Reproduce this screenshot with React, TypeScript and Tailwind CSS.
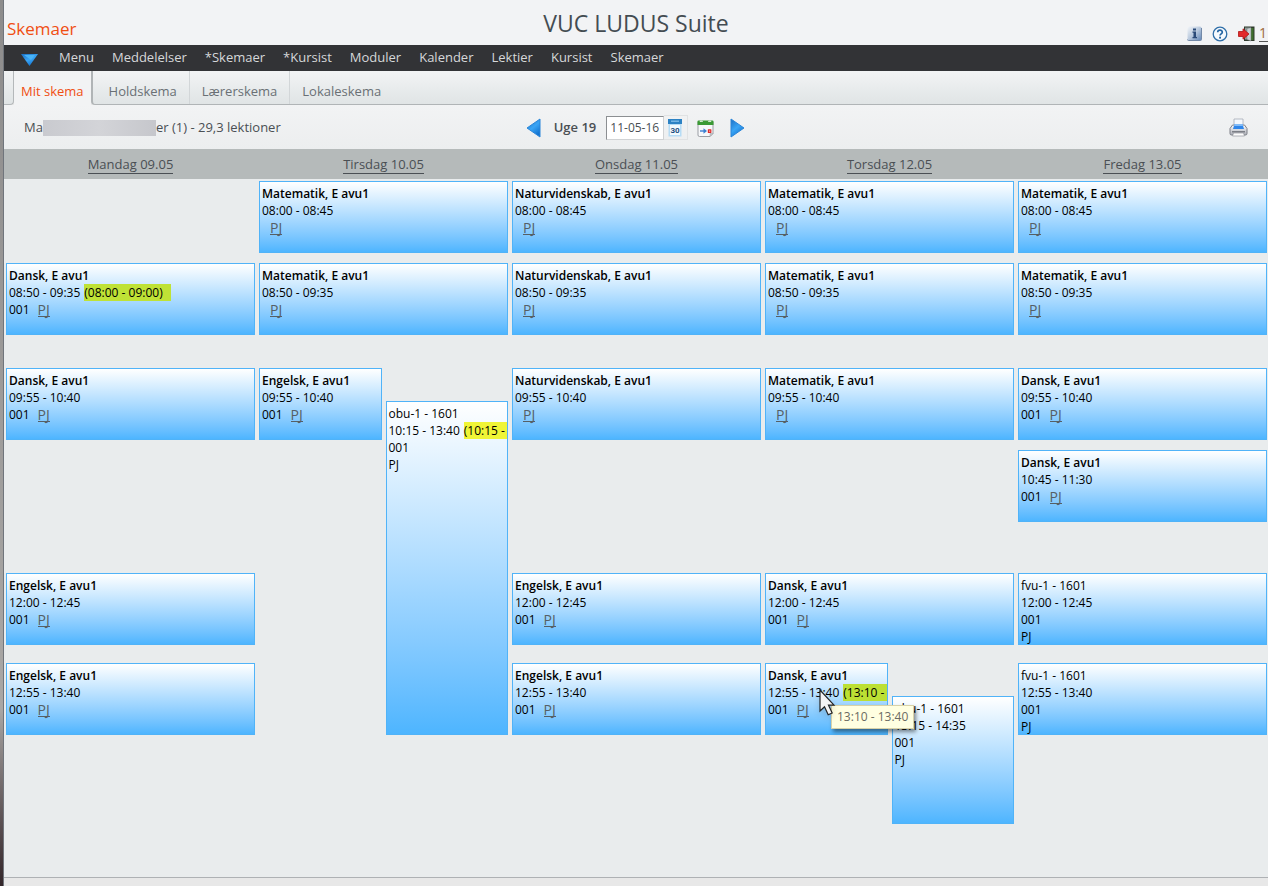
import { clsx } from "clsx";

type Lesson = {
  title: string;
  time: string;
  place: string;
  room?: string;
  plain?: boolean;
  extra?: string;
  extraClass?: string;
  hint?: string;
};

// Rows follow the start and end times of the lessons
const FULL = {
  l0800: "col-span-2 row-start-1 row-end-2",
  l0850: "col-span-2 row-start-3 row-end-4",
  l0955: "col-span-2 row-start-5 row-end-7",
  l1045: "col-span-2 row-start-8 row-end-9",
  l1200: "col-span-2 row-start-10 row-end-11",
  l1255: "col-span-2 row-start-12 row-end-14",
};

const days: { name: string; lessons: Lesson[] }[] = [
  {
    name: "Mandag 09.05",
    lessons: [
      {
        title: "Dansk, E avu1",
        time: "08:50 - 09:35",
        room: "001",
        place: FULL.l0850,
        extra: "(08:00 - 09:00)",
        extraClass: "bg-[#bfe236] pr-2",
      },
      { title: "Dansk, E avu1", time: "09:55 - 10:40", room: "001", place: FULL.l0955 },
      { title: "Engelsk, E avu1", time: "12:00 - 12:45", room: "001", place: FULL.l1200 },
      { title: "Engelsk, E avu1", time: "12:55 - 13:40", room: "001", place: FULL.l1255 },
    ],
  },
  {
    name: "Tirsdag 10.05",
    lessons: [
      { title: "Matematik, E avu1", time: "08:00 - 08:45", place: FULL.l0800 },
      { title: "Matematik, E avu1", time: "08:50 - 09:35", place: FULL.l0850 },
      {
        title: "Engelsk, E avu1",
        time: "09:55 - 10:40",
        room: "001",
        place: "col-start-1 row-start-5 row-end-7",
      },
      {
        title: "obu-1 - 1601",
        time: "10:15 - 13:40",
        room: "001",
        plain: true,
        place: "col-start-2 row-start-6 row-end-14",
        extra: "(10:15 -",
        extraClass: "flex-1 bg-[#f0f536]",
      },
    ],
  },
  {
    name: "Onsdag 11.05",
    lessons: [
      { title: "Naturvidenskab, E avu1", time: "08:00 - 08:45", place: FULL.l0800 },
      { title: "Naturvidenskab, E avu1", time: "08:50 - 09:35", place: FULL.l0850 },
      { title: "Naturvidenskab, E avu1", time: "09:55 - 10:40", place: FULL.l0955 },
      { title: "Engelsk, E avu1", time: "12:00 - 12:45", room: "001", place: FULL.l1200 },
      { title: "Engelsk, E avu1", time: "12:55 - 13:40", room: "001", place: FULL.l1255 },
    ],
  },
  {
    name: "Torsdag 12.05",
    lessons: [
      { title: "Matematik, E avu1", time: "08:00 - 08:45", place: FULL.l0800 },
      { title: "Matematik, E avu1", time: "08:50 - 09:35", place: FULL.l0850 },
      { title: "Matematik, E avu1", time: "09:55 - 10:40", place: FULL.l0955 },
      { title: "Dansk, E avu1", time: "12:00 - 12:45", room: "001", place: FULL.l1200 },
      {
        title: "Dansk, E avu1",
        time: "12:55 - 13:40",
        room: "001",
        place: "col-start-1 row-start-12 row-end-14 z-10",
        extra: "(13:10 -",
        extraClass: "flex-1 bg-[#bce034]",
        hint: "13:10 - 13:40",
      },
      {
        title: "obu-1 - 1601",
        time: "13:15 - 14:35",
        room: "001",
        plain: true,
        place: "col-start-2 row-start-13 row-end-15",
      },
    ],
  },
  {
    name: "Fredag 13.05",
    lessons: [
      { title: "Matematik, E avu1", time: "08:00 - 08:45", place: FULL.l0800 },
      { title: "Matematik, E avu1", time: "08:50 - 09:35", place: FULL.l0850 },
      { title: "Dansk, E avu1", time: "09:55 - 10:40", room: "001", place: FULL.l0955 },
      { title: "Dansk, E avu1", time: "10:45 - 11:30", room: "001", place: FULL.l1045 },
      { title: "fvu-1 - 1601", time: "12:00 - 12:45", room: "001", plain: true, place: FULL.l1200 },
      { title: "fvu-1 - 1601", time: "12:55 - 13:40", room: "001", plain: true, place: FULL.l1255 },
    ],
  },
];

const menu = [
  "Menu",
  "Meddelelser",
  "*Skemaer",
  "*Kursist",
  "Moduler",
  "Kalender",
  "Lektier",
  "Kursist",
  "Skemaer",
];

const tabs = ["Holdskema", "Lærerskema", "Lokaleskema"];

function Gradients() {
  return (
    <svg width="0" height="0" className="absolute" aria-hidden="true">
      <defs>
        <linearGradient id="blue" x1="0" y1="0" x2="0.6" y2="1">
          <stop offset="0" stopColor="#1a6fc4" />
          <stop offset="0.55" stopColor="#3aa5f5" />
          <stop offset="1" stopColor="#1273d0" />
        </linearGradient>
        <linearGradient id="info" x1="0" y1="0" x2="1" y2="1">
          <stop offset="0" stopColor="#f4f6f9" />
          <stop offset="0.5" stopColor="#b9c9de" />
          <stop offset="1" stopColor="#5f84b6" />
        </linearGradient>
        <linearGradient id="body" x1="0" y1="0" x2="0" y2="1">
          <stop offset="0" stopColor="#ffffff" />
          <stop offset="1" stopColor="#a9acb5" />
        </linearGradient>
      </defs>
    </svg>
  );
}

function Triangle({ points }: { points: string }) {
  return (
    <svg width="16" height="20" viewBox="0 0 16 20">
      <polygon points={points} fill="url(#blue)" stroke="#2b86d9" strokeWidth="1" />
    </svg>
  );
}

function InfoIcon() {
  return (
    <svg width="15" height="15" viewBox="0 0 15 15">
      <rect x="0.5" y="0.5" width="14" height="14" rx="1.5" fill="url(#info)" />
      <path d="M0.5 13.5q0 1 1 1h12q1 0 1-1V2" fill="none" stroke="#7389a8" />
      <rect x="6" y="2.5" width="3" height="2" fill="#2b4a78" />
      <path d="M5.500 5.500H9v5.500h1v1.200H5.500V11h1V6.800h-1z" fill="#2b4a78" />
    </svg>
  );
}

function HelpIcon() {
  return (
    <svg width="16" height="16" viewBox="0 0 16 16">
      <circle cx="8" cy="8" r="6.8" fill="#f5f9fd" stroke="#2f6ea8" strokeWidth="1.3" />
      <path
        d="M5.700 6.300C5.700 3.400 10.300 3.400 10.300 6.200C10.300 7.800 8 7.900 8 9.600"
        fill="none"
        stroke="#2565a3"
        strokeWidth="1.700"
      />
      <rect x="7.100" y="10.700" width="1.900" height="1.900" fill="#2565a3" />
    </svg>
  );
}

function ExitIcon() {
  return (
    <svg width="17" height="16" viewBox="0 0 17 16">
      <rect x="6" y="0.500" width="10.500" height="14.500" fill="#2f3a2c" />
      <path d="M13 2h2.500v12H13z" fill="#3f6f2c" />
      <path d="M7 1.500h4.500v12H7z" fill="#8f9a98" />
      <path d="M9 2.500l4-1v13.500L9 13.500z" fill="#c9cfd2" stroke="#6d7476" strokeWidth="0.500" />
      <path d="M0.500 5.500h4.500V2.800L11 8l-6 5.200v-2.700H0.500z" fill="#e22a2a" stroke="#b01414" strokeWidth="0.800" />
    </svg>
  );
}

function CalendarIcon() {
  return (
    <svg width="14" height="18" viewBox="0 0 14 18">
      <rect x="0.500" y="0.500" width="13" height="17" fill="#b6dcf5" />
      <rect x="0" y="0" width="14" height="5" fill="#2c82c4" />
      <rect x="3" y="1.500" width="8" height="1.500" fill="#75b5e4" />
      <rect x="2" y="6" width="10" height="10" fill="#f2fafe" />
      <text
        x="7"
        y="14"
        textAnchor="middle"
        fontSize="8"
        fontWeight="700"
        fontFamily="Roboto, sans-serif"
        fill="#1d4f80"
      >
        30
      </text>
    </svg>
  );
}

function TodayIcon() {
  return (
    <svg width="17" height="18" viewBox="0 0 17 18">
      <path d="M1 3h15v11.500l-3 3H2.500q-1.500 0-1.500-1.500z" fill="#f7f8fa" stroke="#9a9da3" />
      <path d="M13 17.500v-3h3z" fill="#c6c9cf" stroke="#9a9da3" strokeWidth="0.500" />
      <path d="M0.500 2.500q0-1 1-1h14q1 0 1 1V6h-16z" fill="#3b9a35" />
      <path d="M3 2.800a1.500 1.500 0 0 1 2.600 0M11.400 2.800a1.500 1.500 0 0 1 2.600 0" fill="none" stroke="#e6f2e2" strokeWidth="1.200" />
      <path d="M3 12h5" stroke="#3b7fd0" strokeWidth="1.400" />
      <path d="M6.500 9.300L10 12l-3.500 2.700z" fill="#3b7fd0" />
      <rect x="10.800" y="10.300" width="3.600" height="3.600" rx="0.500" fill="#e02a2a" />
      <rect x="12.200" y="11.600" width="1" height="1" fill="#fff" />
    </svg>
  );
}

function PrinterIcon() {
  return (
    <svg width="19" height="19" viewBox="0 0 19 19">
      <path d="M3.500 7L1 10.500v5q0 1.500 1.500 1.500h14q1.500 0 1.500-1.500v-5L15.500 7z" fill="url(#body)" stroke="#7c7f87" />
      <path d="M5 1h9v7H5z" fill="#f4f8fd" stroke="#a6abb5" strokeWidth="0.800" />
      <path d="M5.500 6h8l1.500 5H4z" fill="#2f86ea" />
      <path d="M5.500 6h8l.5 2H5z" fill="#83bbf6" />
      <path d="M3 13h13v1.500H3z" fill="#7c7f87" />
      <path d="M4.500 15h10l1 3h-12z" fill="#fdfdfd" stroke="#94979d" strokeWidth="0.700" />
    </svg>
  );
}

function Pointer() {
  return (
    <svg width="20" height="30" viewBox="0 0 20 30" className="drop-shadow-md">
      <path
        d="M1 1v21l4.500-4.200 3.700 8 4-1.800-3.700-7.800h5.500z"
        fill="#f4f4f4"
        stroke="#222"
        strokeWidth="1.200"
      />
    </svg>
  );
}

function LessonCard({ lesson }: { lesson: Lesson }) {
  return (
    <div className={clsx("relative min-w-0", lesson.place)}>
      <article className="h-full overflow-hidden whitespace-nowrap border border-[#50b3f8] bg-linear-to-b from-white to-[#4db5ff] pt-[3px] pl-[2px] text-xs leading-[17px] text-black">
        <h3 className={lesson.plain ? "font-normal" : "font-semibold"}>{lesson.title}</h3>
        <p className="flex">
          {lesson.time}
          {lesson.extra && (
            <span className={clsx("ml-1 h-[17px]", lesson.extraClass)}>{lesson.extra}</span>
          )}
        </p>
        {lesson.plain ? (
          <>
            <p>{lesson.room}</p>
            <p>PJ</p>
          </>
        ) : (
          <p className="flex gap-2">
            <span>{lesson.room}</span>
            <a href="#pj" className="h-4 border-b border-[#555f66] text-sm leading-[17px] text-[#555f66]">
              PJ
            </a>
          </p>
        )}
      </article>
      {lesson.hint && (
        <>
          <div
            role="tooltip"
            className="absolute top-[42px] left-[66px] border border-[#d8d2a8] bg-[#ffffe1] px-[5px] text-xs leading-[22px] whitespace-nowrap text-[#6b6b62] shadow-[2px_3px_4px_rgba(0,0,0,0.45)]"
          >
            {lesson.hint}
          </div>
          <div className="absolute top-[26px] left-[54px]">
            <Pointer />
          </div>
        </>
      )}
    </div>
  );
}

export default function App() {
  return (
    <div className="flex min-h-screen overflow-hidden bg-[#e8e8e8] font-['Trebuchet_MS','Open_Sans','Noto_Sans',sans-serif] text-[13px] text-[#4a4f54]">
      <Gradients />
      {/* Window edge */}
      <div className="w-1 shrink-0 border-r border-[#70757c] bg-linear-to-b from-[#8d8c8c] via-[#a9a7a5] via-80% to-[#33262a]" />

      <div className="min-w-0 flex-1">
        <header className="grid h-[45px] grid-cols-[1fr_auto_1fr] items-end bg-[#f2f3f5]">
          <h2 className="pb-1 pl-[3px] text-[17px] leading-6 text-[#f04e12]">Skemaer</h2>
          <h1 className="pb-1 text-[23px] leading-9 text-[#444c52]">VUC LUDUS Suite</h1>
          <div className="flex items-center justify-end gap-[10px] pb-[3px]">
            <button type="button" aria-label="Information">
              <InfoIcon />
            </button>
            <button type="button" aria-label="Hjælp">
              <HelpIcon />
            </button>
            <div className="flex items-center gap-1">
              <button type="button" aria-label="Log ud">
                <ExitIcon />
              </button>
              <a href="#session" className="border-b border-[#555] pr-px text-sm leading-4 text-[#a06a3a]">
                1
              </a>
            </div>
          </div>
        </header>

        <nav className="flex h-[26px] items-center bg-[#323336] pl-[17px] text-[#d6d8da]">
          <button type="button" aria-label="Vis menu" className="mr-[21px]">
            <svg width="17" height="12" viewBox="0 0 17 12" className="mt-1">
              <polygon points="0,0 17,0 8.5,12" fill="url(#blue)" />
              <polygon points="3,1 14,1 10,6" fill="#49b4f7" />
            </svg>
          </button>
          <ul className="flex gap-[18px]">
            {menu.map((item, i) => (
              <li key={i}>
                <a href="#menu">{item}</a>
              </li>
            ))}
          </ul>
        </nav>

        <div className="flex h-[34px] text-[#6a7075]">
          <div className="w-[10px] rounded-br-sm border-r border-b border-[#b4b8ba] bg-linear-to-b from-[#f0f2f3] to-[#e0e4e5]" />
          <a href="#mit" className="bg-[#f2f3f4] px-[7px] pt-[11px] leading-[18px] text-[#f04e12]">
            Mit skema
          </a>
          <div className="flex flex-1 rounded-bl-sm border-b border-l-2 border-[#b0b4b6] bg-linear-to-b from-[#f2f4f5] to-[#e0e4e5] pl-1">
            {tabs.map((tab) => (
              <a
                key={tab}
                href="#tab"
                className="border-r border-[#d2d6d8] px-3 pt-[11px] leading-[18px] last:border-r-0"
              >
                {tab}
              </a>
            ))}
          </div>
        </div>

        <div className="grid h-11 grid-cols-[1fr_auto_1fr] items-center bg-linear-to-b from-[#f2f3f4] to-[#eceeef] pt-px">
          <p className="flex items-center pl-5">
            Ma
            <span className="h-4 w-[113px] bg-linear-to-r from-[#c9cacf] via-[#d3d4d8] to-[#c6c7cc]" />
            er (1) - 29,3 lektioner
          </p>
          <div className="flex items-center">
            <button type="button" aria-label="Forrige uge" className="mr-3">
              <Triangle points="1,10 14,1 14,19" />
            </button>
            <label htmlFor="date" className="mr-[10px] font-semibold">
              Uge 19
            </label>
            <input
              id="date"
              defaultValue="11-05-16"
              className="h-6 w-[58px] border border-[#d0d2d4] border-t-[#8c8f92] border-l-[#8c8f92] bg-white pl-[3px] text-xs"
            />
            <button
              type="button"
              aria-label="Vælg dato"
              className="mr-[9px] flex h-[25px] w-6 items-center border border-l-0 border-[#e0e2e3] pl-1"
            >
              <CalendarIcon />
            </button>
            <button type="button" aria-label="I dag" className="mr-4">
              <TodayIcon />
            </button>
            <button type="button" aria-label="Næste uge">
              <Triangle points="1,1 14,10 1,19" />
            </button>
          </div>
          <button type="button" aria-label="Udskriv" className="mr-5 justify-self-end">
            <PrinterIcon />
          </button>
        </div>

        <main className="-mr-px border-b border-[#aeb1b4] bg-[#e9eced] pb-[53px]">
          <div className="grid h-[30px] grid-cols-5 items-center bg-[#b5baba] pt-px text-center">
            {days.map((day) => (
              <div key={day.name}>
                <a href="#dag" className="border-b border-[#4a4f54] leading-4">
                  {day.name}
                </a>
              </div>
            ))}
          </div>
          <div className="grid grid-cols-5 pt-[2px]">
            {days.map((day) => (
              <section
                key={day.name}
                aria-label={day.name}
                className="grid min-w-0 grid-cols-2 grid-rows-[72px_10px_72px_33px_33px_39px_10px_72px_51px_72px_18px_33px_39px_89px] gap-x-1 px-[2px]"
              >
                {day.lessons.map((lesson, i) => (
                  <LessonCard key={i} lesson={lesson} />
                ))}
              </section>
            ))}
          </div>
        </main>
      </div>
    </div>
  );
}
